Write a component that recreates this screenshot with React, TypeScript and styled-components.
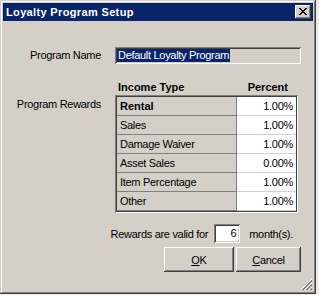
import React from "react";
import styled, { createGlobalStyle } from "styled-components";

const Global = createGlobalStyle`
  html, body { margin: 0; padding: 0; background: #ecebe6; }
  body { font-family: "Liberation Sans", Arial, sans-serif; font-size: 11px; color: #000; letter-spacing: -0.3px; }
`;

const raised = `
  box-shadow: inset -1px -1px #404040, inset 1px 1px #ffffff,
    inset -2px -2px #808080, inset 2px 2px #d4d0c8;
`;
const sunken = `
  box-shadow: inset 1px 1px #808080, inset -1px -1px #ffffff,
    inset 2px 2px #404040, inset -2px -2px #d4d0c8;
`;

const Window = styled.div`
  position: relative;
  box-sizing: border-box;
  width: 316px;
  height: 294px;
  padding: 3px;
  background: #d4d0c8;
  box-shadow: inset -1px -1px #404040, inset 1px 1px #d4d0c8,
    inset -2px -2px #808080, inset 2px 2px #ffffff;
  display: flex;
  flex-direction: column;
`;

const TitleBar = styled.div`
  height: 18px;
  background: #0a246a;
  display: flex;
  align-items: center;
  justify-content: space-between;
  padding: 0 2px 0 3px;
`;

const Title = styled.span`
  color: #fff;
  font-weight: bold;
  font-size: 11px;
  letter-spacing: 0.35px;
`;

const CloseButton = styled.div`
  width: 16px;
  height: 14px;
  background: #d4d0c8;
  ${raised}
  display: flex;
  align-items: center;
  justify-content: center;
  padding-bottom: 1px;
  box-sizing: border-box;
`;

const Form = styled.div`
  display: flex;
  flex-direction: column;
  padding-top: 26px;
`;

const FieldRow = styled.div<{ $top?: boolean; $gap?: number }>`
  display: flex;
  align-items: ${(p) => (p.$top ? "flex-start" : "center")};
  margin-top: ${(p) => p.$gap ?? 0}px;
`;

const Label = styled.div<{ $pad?: number }>`
  width: 98px;
  margin-right: 14px;
  text-align: right;
  line-height: 13px;
  padding-top: ${(p) => p.$pad ?? 0}px;
  white-space: nowrap;
`;

const NameField = styled.div`
  box-sizing: border-box;
  width: 186px;
  height: 17px;
  padding: 0 2px;
  ${sunken}
  background: #d4d0c8;
  display: flex;
  align-items: center;
`;

const Selected = styled.span`
  background: #0a246a;
  color: #fff;
  line-height: 13px;
  padding: 0 1px;
  white-space: nowrap;
`;

const TableWrap = styled.div`
  display: flex;
  flex-direction: column;
`;

const HeaderRow = styled.div`
  display: flex;
  height: 16px;
  line-height: 16px;
  font-weight: bold;
  padding-left: 2px;
  letter-spacing: 0;
`;

const HeadCell = styled.div<{ $w: number; $right?: boolean }>`
  width: ${(p) => p.$w}px;
  box-sizing: border-box;
  text-align: ${(p) => (p.$right ? "right" : "left")};
  padding: ${(p) => (p.$right ? "0 8px 0 0" : "0 0 0 1px")};
`;

const Table = styled.div`
  box-sizing: border-box;
  width: 183px;
  padding: 2px;
  background: #d4d0c8;
  box-shadow: inset 1px 1px #808080, inset -1px -1px #ffffff,
    inset 2px 2px #404040, inset -2px -2px #404040;
`;

const Row = styled.div`
  display: flex;
  height: 19px;
`;

const TypeCell = styled.div<{ $bold?: boolean }>`
  box-sizing: border-box;
  width: 120px;
  padding-left: 3px;
  border-right: 1px solid #808080;
  border-bottom: 1px solid #808080;
  line-height: 18px;
  font-weight: ${(p) => (p.$bold ? "bold" : "normal")};
  letter-spacing: ${(p) => (p.$bold ? "0" : "-0.3px")};
  white-space: nowrap;
`;

const PercentCell = styled.div`
  box-sizing: border-box;
  width: 59px;
  background: #fff;
  border-bottom: 1px solid #d4d0c8;
  text-align: right;
  padding-right: 3px;
  line-height: 18px;
`;

const ValidRow = styled.div`
  display: flex;
  align-items: center;
  justify-content: flex-end;
  padding-right: 20px;
  margin-top: 11px;
  gap: 6px;
`;

const SmallInput = styled.div`
  box-sizing: border-box;
  width: 26px;
  height: 19px;
  background: #fff;
  ${sunken}
  text-align: right;
  padding-right: 4px;
  line-height: 19px;
  margin-right: 3px;
`;

const ButtonRow = styled.div`
  display: flex;
  justify-content: flex-end;
  gap: 2px;
  padding-right: 12px;
  margin-top: 4px;
`;

const Button = styled.div<{ $w: number }>`
  box-sizing: border-box;
  width: ${(p) => p.$w}px;
  height: 25px;
  background: #d4d0c8;
  ${raised}
  display: flex;
  align-items: center;
  justify-content: center;
  u { text-decoration: underline; }
`;

const Grip = styled.svg`
  position: absolute;
  right: 3px;
  bottom: 3px;
`;

const rows: [string, string, boolean?][] = [
  ["Rental", "1.00%", true],
  ["Sales", "1.00%"],
  ["Damage Waiver", "1.00%"],
  ["Asset Sales", "0.00%"],
  ["Item Percentage", "1.00%"],
  ["Other", "1.00%"],
];

export default function App() {
  return (
    <>
      <Global />
      <Window>
        <TitleBar>
          <Title>Loyalty Program Setup</Title>
          <CloseButton>
            <svg width="8" height="7" viewBox="0 0 8 7" shapeRendering="crispEdges">
              <path
                fill="#000"
                d="M0 0h2v1H0zM6 0h2v1H6zM1 1h2v1H1zM5 1h2v1H5zM2 2h4v1H2zM3 3h2v1H3zM2 4h4v1H2zM1 5h2v1H1zM5 5h2v1H5zM0 6h2v1H0zM6 6h2v1H6z"
              />
            </svg>
          </CloseButton>
        </TitleBar>
        <Form>
          <FieldRow>
            <Label>Program Name</Label>
            <NameField>
              <Selected>Default Loyalty Program</Selected>
            </NameField>
          </FieldRow>
          <FieldRow $top $gap={15}>
            <Label $pad={19}>Program Rewards</Label>
            <TableWrap>
              <HeaderRow>
                <HeadCell $w={120}>Income Type</HeadCell>
                <HeadCell $w={59} $right>
                  Percent
                </HeadCell>
              </HeaderRow>
              <Table>
                {rows.map(([t, p, b]) => (
                  <Row key={t}>
                    <TypeCell $bold={b}>{t}</TypeCell>
                    <PercentCell>{p}</PercentCell>
                  </Row>
                ))}
              </Table>
            </TableWrap>
          </FieldRow>
          <ValidRow>
            <span>Rewards are valid for</span>
            <SmallInput>6</SmallInput>
            <span>month(s).</span>
          </ValidRow>
          <ButtonRow>
            <Button $w={70}>
              <span>
                <u>O</u>K
              </span>
            </Button>
            <Button $w={65}>
              <span>
                <u>C</u>ancel
              </span>
            </Button>
          </ButtonRow>
        </Form>
        <Grip width="12" height="12" viewBox="0 0 12 12" shapeRendering="crispEdges">
          <path stroke="#fff" d="M11 0L0 11M11 4L4 11M11 8L8 11" />
          <path stroke="#808080" d="M11 1L1 11M11 2L2 11M11 5L5 11M11 6L6 11M11 9L9 11M11 10L10 11" />
        </Grip>
      </Window>
    </>
  );
}
